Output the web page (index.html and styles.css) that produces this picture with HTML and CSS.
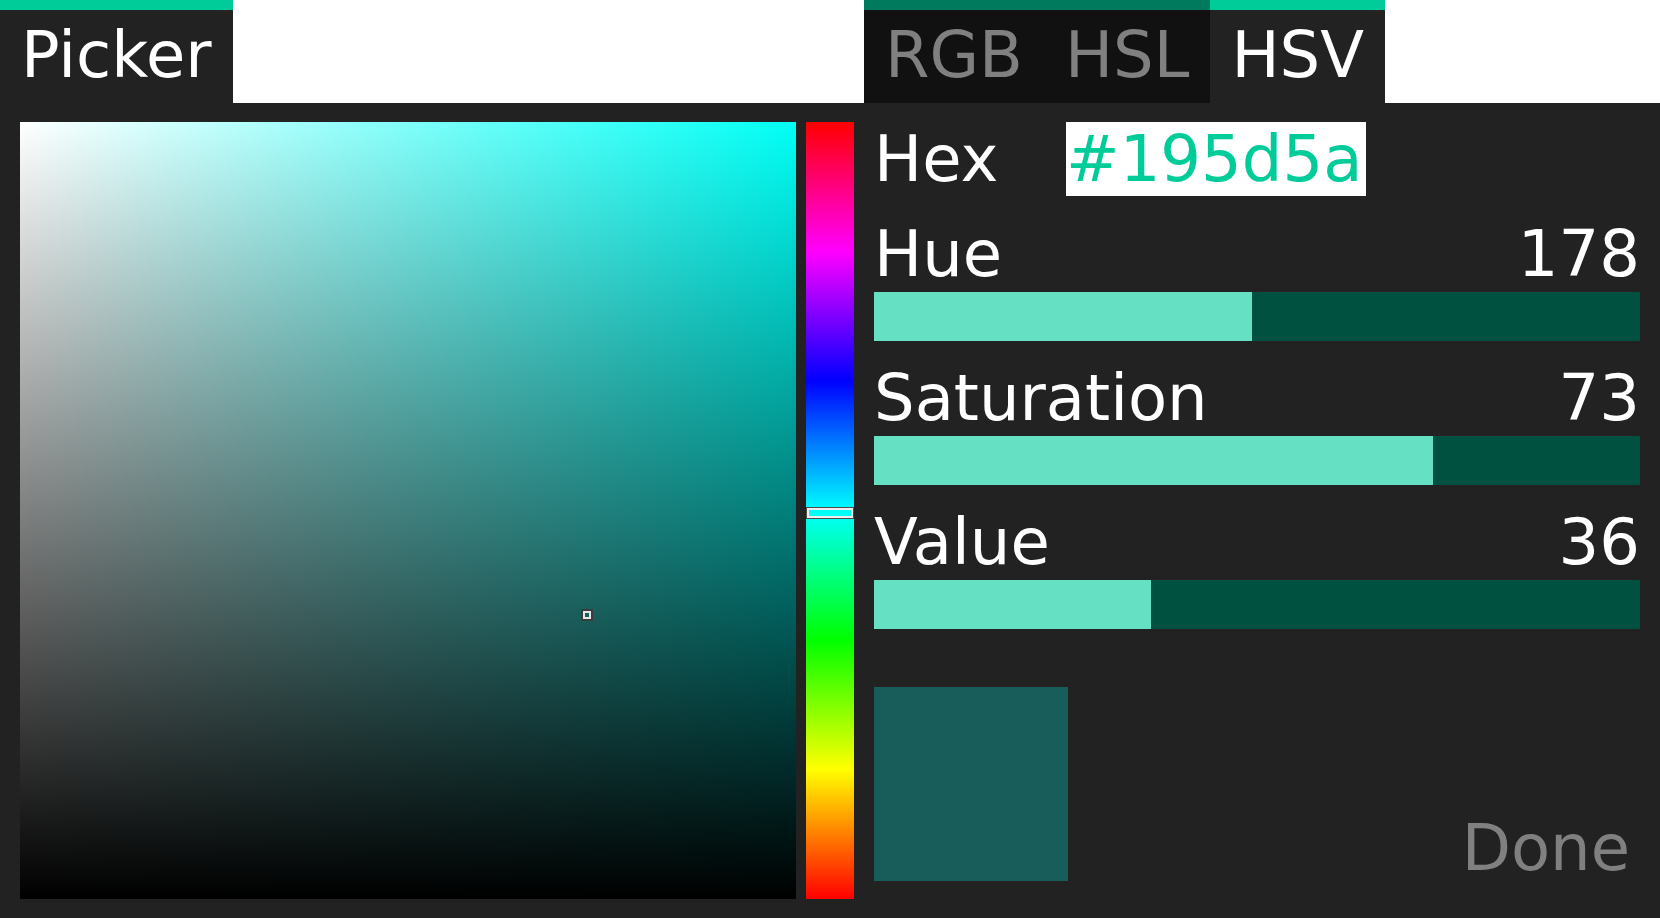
FILE: index.html
```html
<!DOCTYPE html>
<html lang="en">
<head>
<meta charset="utf-8">
<title>Color Picker</title>
<link rel="stylesheet" href="styles.css">
</head>
<body>
<div class="app">
  <div class="tabbar">
    <div class="tabs-left">
      <div class="tab active">Picker</div>
    </div>
    <div class="tabs-right">
      <div class="tab inactive">RGB</div>
      <div class="tab inactive">HSL</div>
      <div class="tab active">HSV</div>
    </div>
  </div>
  <div class="main">
    <div class="sv">
      <div class="sv-marker" style="left:73.07%; top:63.45%"></div>
    </div>
    <div class="hue-strip">
      <div class="hue-marker" style="top:50.36%"></div>
    </div>
    <div class="controls">
      <div class="hex-row">
        <span class="hex-label">Hex</span>
        <span class="hex-box">#195d5a</span>
      </div>
      <div class="slider">
        <div class="slider-head"><span>Hue</span><span>178</span></div>
        <div class="bar"><div class="fill" style="width:49.3%"></div></div>
      </div>
      <div class="slider">
        <div class="slider-head"><span>Saturation</span><span>73</span></div>
        <div class="bar"><div class="fill" style="width:73%"></div></div>
      </div>
      <div class="slider">
        <div class="slider-head"><span>Value</span><span>36</span></div>
        <div class="bar"><div class="fill" style="width:36.2%"></div></div>
      </div>
      <div class="bottom">
        <div class="swatch"></div>
        <div class="done">Done</div>
      </div>
    </div>
  </div>
</div>
</body>
</html>
```

FILE: styles.css
```css
html, body {
  margin: 0;
  padding: 0;
  background: #ffffff;
}

.app {
  width: 1660px;
  height: 918px;
  display: flex;
  flex-direction: column;
  font-family: "DejaVu Sans", "Liberation Sans", sans-serif;
  font-size: 64px;
  line-height: 74.5px;
  color: #ffffff;
}

.tabbar {
  height: 103px;
  display: flex;
  flex: none;
}

.tabs-left {
  width: 864px;
  display: flex;
}

.tabs-right {
  display: flex;
}

.tab {
  box-sizing: border-box;
  height: 103px;
  padding: 8px 21px 0 21px;
  border-top: 10px solid #00cc99;
  white-space: nowrap;
}

.tab.active {
  background: #222222;
  color: #ffffff;
}

.tab.inactive {
  background: #111111;
  color: #808080;
  border-top-color: #007a5c;
}

.main {
  flex: 1;
  display: flex;
  background: #222222;
  padding: 19px 20px;
}

.sv {
  position: relative;
  width: 776px;
  flex: none;
  background:
    linear-gradient(to top, #000000, rgba(0, 0, 0, 0)),
    linear-gradient(to right, #ffffff, rgba(255, 255, 255, 0)),
    #00fff6;
}

.sv-marker {
  position: absolute;
  width: 12px;
  height: 12px;
  box-sizing: border-box;
  transform: translate(-50%, -50%);
  border: 2px solid #3c3c3c;
  box-shadow: inset 0 0 0 2px #e6e6e6;
}

.hue-strip {
  position: relative;
  width: 48px;
  flex: none;
  margin-left: 10px;
  background: linear-gradient(to bottom,
    #ff0000 0%,
    #ff00ff 16.667%,
    #0000ff 33.333%,
    #00ffff 50%,
    #00ff00 66.667%,
    #ffff00 83.333%,
    #ff0000 100%);
}

.hue-marker {
  position: absolute;
  left: 0;
  right: 0;
  height: 12px;
  box-sizing: border-box;
  transform: translateY(-50%);
  border: 1px solid #4a4a4a;
  box-shadow: inset 0 0 0 2px #eeeeee;
  background: #00fff6;
}

.controls {
  flex: 1;
  margin-left: 20px;
  display: flex;
  flex-direction: column;
}

.hex-row {
  display: flex;
  align-items: flex-start;
}

.hex-label {
  width: 192px;
}

.hex-box {
  width: 300px;
  height: 74px;
  background: #ffffff;
  color: #00cc99;
  white-space: nowrap;
}

.slider {
  margin-top: 20.5px;
}

.slider-head {
  display: flex;
  justify-content: space-between;
}

.bar {
  height: 48.5px;
  background: #00513f;
  margin-top: 0.5px;
}

.fill {
  height: 100%;
  background: #66e0c2;
}

.bottom {
  margin-top: 58px;
  display: flex;
  justify-content: space-between;
  align-items: flex-end;
}

.swatch {
  width: 194px;
  height: 194px;
  background: #195d5a;
  margin-bottom: 18px;
}

.done {
  color: #808080;
  padding: 0 10px 13px 0;
}
```
